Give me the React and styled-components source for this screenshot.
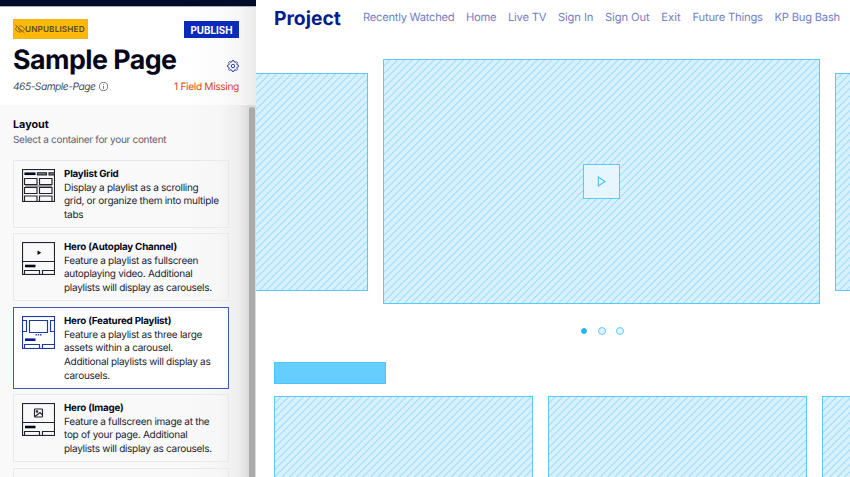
import React from "react";
import styled, { createGlobalStyle, css } from "styled-components";

const GlobalStyle = createGlobalStyle`
  * { box-sizing: border-box; }
  body { margin: 0; overflow: hidden; background: #fff; font-family: Inter, "Open Sans", sans-serif; text-rendering: geometricPrecision; }
  h1, h2, h3, p { margin: 0; }
`;

const Page = styled.div`
  display: flex;
  width: 850px;
  height: 477px;
  overflow: hidden;
`;

const Sidebar = styled.aside`
  width: 256px;
  flex: none;
  display: flex;
  flex-direction: column;
  color: #05071a;
`;

const TopBar = styled.div`
  height: 7px;
  flex: none;
  background: #020b28;
  border-bottom: 1px solid #a8abb9;
`;

const PageHeader = styled.header`
  height: 98px;
  flex: none;
  padding: 12px 17px 0 13px;
  background: linear-gradient(to right, #fff 185px, #fbfbfb 225px, #f5f5f5 242px, #eaeaea 256px);
`;

const Row = styled.div`
  display: flex;
  justify-content: space-between;
`;

const Badge = styled.span`
  display: flex;
  align-items: center;
  width: 75px;
  height: 20px;
  padding-left: 1px;
  border: 1px solid #f2b51b;
  background: #ffb90a;
  color: #5c4a1d;
  font-size: 8.2px;
  font-weight: 600;
  letter-spacing: 0.14px;
  white-space: nowrap;
  svg { flex: none; }
`;

const PublishButton = styled.button`
  width: 55px;
  height: 17px;
  margin-top: 2px;
  padding: 2px 0 0;
  border: 0;
  background: #0a2abc;
  color: #fff;
  font: 700 9.8px/15px Inter, sans-serif;
`;

const TitleRow = styled(Row)`
  height: 41px;
  align-items: flex-end;
  svg { margin-bottom: 8px; flex: none; }
`;

const Title = styled.h1`
  padding-top: 1px;
  font-size: 26.8px;
  line-height: 40px;
  font-weight: 750;
  letter-spacing: -0.55px;
  white-space: nowrap;
`;

const MetaRow = styled(Row)`
  height: 13px;
  align-items: center;
  font-size: 10.2px;
  white-space: nowrap;
`;

const Slug = styled.span`
  display: flex;
  align-items: center;
  gap: 4px;
  color: #4d4d55;
  font-style: italic;
  letter-spacing: -0.48px;
`;

const Missing = styled.span`
  color: #d9481c;
  letter-spacing: -0.35px;
`;

const SidebarBody = styled.div`
  flex: 1;
  min-height: 0;
  display: flex;
  justify-content: space-between;
  background: linear-gradient(to right, #f9f9f9 185px, #f6f6f6 220px, #eee 238px, #dedede 248px);
`;

const Options = styled.div`
  width: 216px;
  margin-left: 13px;
  padding-top: 11px;
  overflow: hidden;
`;

const SectionTitle = styled.h2`
  font-size: 10.8px;
  line-height: 17px;
  font-weight: 700;
`;

const SectionHint = styled.p`
  margin-bottom: 13px;
  color: #62626a;
  font-size: 10px;
  line-height: 15px;
  height: 14px;
  letter-spacing: -0.3px;
`;

const Option = styled.article`
  display: flex;
  gap: 9px;
  height: ${(p) => p.$height}px;
  margin-bottom: ${(p) => p.$after}px;
  padding: 7px 0 0 8px;
  border: 1px solid ${(p) => (p.$selected ? "#4058b0" : "#e9e9ea")};
  background: ${(p) => (p.$selected ? "#fff" : "transparent")};
  color: ${(p) => (p.$selected ? "#2038a4" : "#22232c")};
  svg { flex: none; margin-top: 1px; }
`;

const OptionTitle = styled.h3`
  color: #05071a;
  font-size: 9.8px;
  line-height: 13.6px;
  font-weight: 700;
  letter-spacing: -0.22px;
  white-space: nowrap;
`;

const OptionText = styled.p`
  color: #24252f;
  font-size: 10px;
  line-height: 13.7px;
  letter-spacing: -0.28px;
  white-space: pre;
`;

const Track = styled.div`
  width: 9px;
  padding: 2px 1px 0 2px;
  background: #dcdcdc;
`;

const Thumb = styled.div`
  height: 100%;
  border-radius: 3px 3px 0 0;
  background: #aaa;
`;

const Preview = styled.main`
  flex: 1;
  min-width: 0;
  display: flex;
  flex-direction: column;
  overflow: hidden;
  background: #fff;
`;

const SiteHeader = styled.header`
  display: flex;
  align-items: center;
  height: 34px;
  flex: none;
  padding: 0 10px 0 18px;
`;

const Brand = styled.strong`
  width: 89px;
  padding-top: 1px;
  color: #051c8c;
  font-size: 19.3px;
  line-height: 30px;
`;

const Nav = styled.nav`
  flex: 1;
  display: flex;
  justify-content: space-between;
`;

const NavLink = styled.a`
  color: #7480c5;
  font-size: 11.2px;
  line-height: 18px;
  letter-spacing: ${(p) => p.$spacing ?? -0.2}px;
  white-space: nowrap;
`;

const striped = css`
  border: 1px solid #5bc8f7;
  background: repeating-linear-gradient(135deg, #d9f1fe 0 3.3px, #a8e2fc 3.9px 4.7px, #d9f1fe 5.2px);
`;

const Carousel = styled.section`
  display: flex;
  align-items: center;
  gap: 15px;
  height: 245px;
  flex: none;
  margin-top: 25px;
`;

const SideSlide = styled.div`
  flex: none;
  width: ${(p) => p.$width}px;
  height: 218px;
  ${striped}
  ${(p) => (p.$edge === "left" ? "border-left: 0;" : "border-right: 0;")}
`;

const MainSlide = styled.div`
  flex: none;
  width: 437px;
  height: 245px;
  display: flex;
  align-items: center;
  justify-content: center;
  ${striped}
`;

const PlayBox = styled.div`
  display: flex;
  align-items: center;
  justify-content: center;
  width: 37px;
  height: 35px;
  margin-bottom: 1px;
  border: 1px solid #5bc8f7;
  background: #e6f6ff;
`;

const Dots = styled.div`
  display: flex;
  justify-content: center;
  align-items: center;
  gap: 10px;
  height: 8px;
  flex: none;
  margin: 23px 0 0 97px;
  width: 497px;
`;

const Dot = styled.span`
  width: ${(p) => (p.$on ? 6 : 8)}px;
  height: ${(p) => (p.$on ? 6 : 8)}px;
  margin: 0 ${(p) => (p.$on ? 1 : 0)}px;
  border: 1px solid ${(p) => (p.$on ? "#25b5f5" : "#62cbf8")};
  border-radius: 50%;
  background: ${(p) => (p.$on ? "#25b5f5" : "#e0f4fe")};
`;

const Heading = styled.div`
  width: 112px;
  height: 22px;
  flex: none;
  margin: 27.4px 0 11.600px 18px;
  border: 1px solid #4bc4f7;
  background: #66cdff;
`;

const CardRow = styled.section`
  display: grid;
  grid-template-columns: repeat(3, 259.4px);
  gap: 14.5px;
  flex: 1;
  margin-left: 18px;
`;

const Card = styled.div`
  ${striped}
  border-bottom: 0;
`;

const HiddenIcon = () => (
  <svg width="10" height="10" viewBox="0 0 20 20" fill="none" stroke="currentColor" strokeWidth="1.5">
    <path d="M1 2l18 16M5 5C3 6 1.800 8 1 10c2 4 5 6 9 6 1.700 0 3.200-.4 4.500-1.100M8 4.200C13 3 17 6 19 10c-.6 1.400-1.400 2.600-2.500 3.500M7.500 8c-1.500 3 1.500 6 4.500 4.500" />
  </svg>
);

const GearIcon = () => (
  <svg width="12" height="12" viewBox="0 0 24 24" fill="none" stroke="#2840ad" strokeWidth="2" strokeLinejoin="round">
    <path d="M9.500 4L10.500 1h3l1 3 1.500.7 2.800-1.400 2 2L19.400 8l.7 1.500 3 1v3l-3 1-.7 1.500 1.400 2.800-2 2-2.800-1.400-1.500.7-1 3h-3l-1-3-1.500-.7-2.800 1.400-2-2L4.600 16l-.7-1.500-3-1v-3l3-1 .7-1.500-1.400-2.800 2-2L8 4.700z" />
    <circle cx="12" cy="12" r="3.500" />
  </svg>
);

const InfoIcon = () => (
  <svg width="9" height="9" viewBox="0 0 9 9" fill="none" stroke="#55555c" strokeWidth="0.8">
    <circle cx="4.500" cy="4.500" r="4.100" />
    <path d="M4.500 4v2.800M4.500 2.200v.9" />
  </svg>
);

const LayoutFrame = ({ children }) => (
  <svg width="33" height="33" viewBox="0 0 33 33" fill="none" stroke="currentColor" strokeWidth="1.15">
    <rect x="0.500" y="0.500" width="32" height="32" />
    {children}
  </svg>
);

const GridIcon = () => (
  <LayoutFrame>
    <rect x="3" y="4" width="10" height="1.500" fill="#05071a" stroke="#05071a" />
    <path d="M15.500 3.800h9v2h-9zM32 3.800h-5v2h5" fill="#aaa" />
    <path d="M3 17h27" stroke="#999" strokeWidth="2" />
    <path d="M2.500 9.500h12.500v6H2.500zM17.500 9.500h12.500v6H17.500zM2.500 18.500h12.500v6H2.500zM17.500 18.500h12.500v6H17.500zM2.500 32v-5h12.500v5M17.500 32v-5h12.500v5" />
  </LayoutFrame>
);

const HeroBase = ({ children }) => (
  <LayoutFrame>
    <path d="M0 19.500h33M2.500 32v-3.500h15V32M20.500 32v-3.500H32" />
    <path d="M3 24h10.500" stroke="#05071a" strokeWidth="2.600" />
    {children}
  </LayoutFrame>
);

const AutoplayIcon = () => (
  <HeroBase>
    <path d="M15.500 8.500l3.800 2.200-3.800 2.200z" fill="#05071a" stroke="none" />
  </HeroBase>
);

const ImageIcon = () => (
  <HeroBase>
    <rect x="12.500" y="6" width="8" height="8" rx="0.800" />
    <path d="M13 13.500l5-4 2.500 2.500" />
    <circle cx="15" cy="8.500" r="0.700" />
  </HeroBase>
);

const FeaturedIcon = () => (
  <LayoutFrame>
    <path d="M7.500 4.500h18v12h-18z" />
    <path d="M1 4.500h3.500v11H1M32 4.500h-3.500v11H32" />
    <path d="M13.500 18.800h6" strokeWidth="1.400" strokeDasharray="1.400 0.900" />
    <path d="M3 23.700h10.500" stroke="#051c8c" strokeWidth="2.600" />
    <path d="M2.500 32v-3.500h15V32M20.500 32v-3.500H32" />
  </LayoutFrame>
);

const PlayIcon = () => (
  <svg width="9" height="11" viewBox="0 0 9 11" fill="none" stroke="#45c3f6" strokeWidth="1.100">
    <path d="M1.300 1v9l6.700-4.500z" />
  </svg>
);

const options = [
  { title: "Playlist Grid", text: "Display a playlist as a scrolling\ngrid, or organize them into multiple\ntabs", icon: GridIcon, height: 68, after: 5 },
  { title: "Hero (Autoplay Channel)", text: "Feature a playlist as fullscreen\nautoplaying video. Additional\nplaylists will display as carousels.", icon: AutoplayIcon, height: 68, after: 6 },
  { title: "Hero (Featured Playlist)", text: "Feature a playlist as three large\nassets within a carousel.\nAdditional playlists will display as\ncarousels.", icon: FeaturedIcon, height: 82, after: 5, selected: true },
  { title: "Hero (Image)", text: "Feature a fullscreen image at the\ntop of your page. Additional\nplaylists will display as carousels.", icon: ImageIcon, height: 68, after: 6 },
];

const links = [
  { label: "Recently Watched", spacing: -0.26 },
  { label: "Home", spacing: -0.3 },
  { label: "Live TV", spacing: -0.2 },
  { label: "Sign In", spacing: -0.1 },
  { label: "Sign Out", spacing: -0.1 },
  { label: "Exit", spacing: 0.1 },
  { label: "Future Things", spacing: -0.18 },
  { label: "KP Bug Bash", spacing: -0.22 },
];

export default function App() {
  return (
    <Page>
      <GlobalStyle />
      <Sidebar>
        <TopBar />
        <PageHeader>
          <Row>
            <Badge><HiddenIcon />UNPUBLISHED</Badge>
            <PublishButton>PUBLISH</PublishButton>
          </Row>
          <TitleRow>
            <Title>Sample Page</Title>
            <GearIcon />
          </TitleRow>
          <MetaRow>
            <Slug>465-Sample-Page <InfoIcon /></Slug>
            <Missing>1 Field Missing</Missing>
          </MetaRow>
        </PageHeader>
        <SidebarBody>
          <Options>
            <SectionTitle>Layout</SectionTitle>
            <SectionHint>Select a container for your content</SectionHint>
            {options.map(({ title, text, icon: Icon, height, after, selected }) => (
              <Option key={title} $height={height} $after={after} $selected={selected}>
                <Icon />
                <div>
                  <OptionTitle>{title}</OptionTitle>
                  <OptionText>{text}</OptionText>
                </div>
              </Option>
            ))}
            <Option $height={68} $after={0} />
          </Options>
          <Track><Thumb /></Track>
        </SidebarBody>
      </Sidebar>
      <Preview>
        <SiteHeader>
          <Brand>Project</Brand>
          <Nav>{links.map((l) => <NavLink key={l.label} $spacing={l.spacing}>{l.label}</NavLink>)}</Nav>
        </SiteHeader>
        <Carousel>
          <SideSlide $width={112} $edge="left" />
          <MainSlide><PlayBox><PlayIcon /></PlayBox></MainSlide>
          <SideSlide $width={20} $edge="right" />
        </Carousel>
        <Dots><Dot $on /><Dot /><Dot /></Dots>
        <Heading />
        <CardRow><Card /><Card /><Card /></CardRow>
      </Preview>
    </Page>
  );
}
